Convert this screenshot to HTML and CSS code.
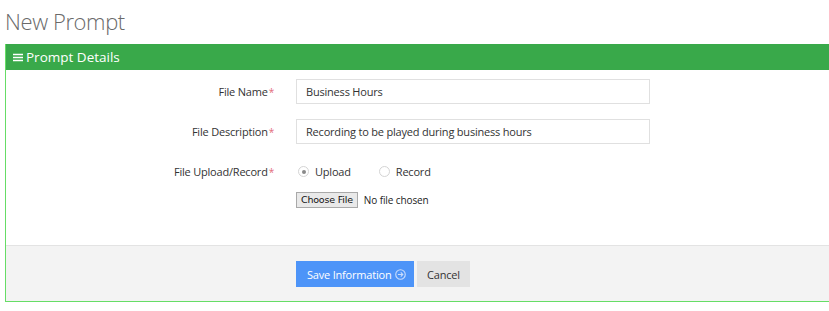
FILE: index.html
```html
<!DOCTYPE html>
<html lang="en">
<head>
    <meta charset="UTF-8">
    <title>New Prompt</title>
    <link rel="stylesheet" href="styles.css">
</head>
<body>
    <h1 class="page-title">New Prompt</h1>

    <div class="panel">
        <div class="panel-heading">
            <svg class="menu-icon" width="10" height="9" viewBox="0 0 10 9">
                <path d="M0 1.5h10M0 4.5h10M0 7.5h10" stroke="#fff" stroke-width="1.6"/>
            </svg>
            Prompt Details
        </div>

        <div class="panel-body">
            <div class="form-row">
                <label class="form-label">File Name<span class="req">*</span></label>
                <input class="form-input" type="text" value="Business Hours">
            </div>
            <div class="form-row">
                <label class="form-label">File Description<span class="req">*</span></label>
                <input class="form-input" type="text" value="Recording to be played during business hours">
            </div>
            <div class="form-row radio-row">
                <label class="form-label">File Upload/Record<span class="req">*</span></label>
                <div class="radio-group">
                    <span class="radio-option"><span class="radio checked"></span>Upload</span>
                    <span class="radio-option"><span class="radio"></span>Record</span>
                </div>
            </div>
            <div class="form-row file-row">
                <span></span>
                <div class="file-picker">
                    <span class="file-button">Choose File</span>
                    <span class="file-text">No file chosen</span>
                </div>
            </div>
        </div>

        <div class="panel-footer">
            <button class="btn btn-save">Save Information
                <svg class="btn-icon" width="11" height="11" viewBox="0 0 12 12">
                    <circle cx="6" cy="6" r="5.2" fill="none" stroke="#c9dcfb" stroke-width="1.2"/>
                    <path d="M3.2 6h5.2M6.3 3.8L8.5 6 6.3 8.2" fill="none" stroke="#c9dcfb" stroke-width="1.2"/>
                </svg>
            </button>
            <button class="btn btn-cancel">Cancel</button>
        </div>
    </div>
</body>
</html>
```

FILE: styles.css
```css
body {
    font-family: "Open Sans", Arial, sans-serif;
    margin: 0;
    background-color: #fff;
    color: #333;
    overflow: hidden;
}

.page-title {
    font-size: 22px;
    font-weight: 300;
    color: #6a6a6a;
    margin: 0;
    padding: 4px 0 0 5px;
    height: 40px;
    line-height: 34px;
    letter-spacing: -0.4px;
}

.panel {
    margin-left: 5px;
    width: 860px;
    border-left: 1px solid #66dd66;
    border-bottom: 1px solid #66dd66;
}

.panel-heading {
    background-color: #39a94a;
    color: #fff;
    font-size: 13.5px;
    height: 26px;
    line-height: 25px;
    padding-left: 7px;
    display: flex;
    align-items: center;
    gap: 3px;
}

.menu-icon {
    display: block;
    margin-top: 1px;
}

.panel-body {
    padding-top: 9px;
    height: 166px;
}

.form-row {
    display: grid;
    grid-template-columns: 268px 354px;
    column-gap: 22px;
    align-items: center;
    margin-bottom: 15px;
}

.form-label {
    text-align: right;
    font-size: 11px;
    letter-spacing: -0.2px;
    color: #333;
}

.req {
    color: #e36a7a;
    margin-left: 1px;
    font-size: 10px;
}

.form-input {
    height: 25px;
    box-sizing: border-box;
    border: 1px solid #e0e0e0;
    padding: 0 9px;
    font-family: "Open Sans", Arial, sans-serif;
    font-size: 11px;
    letter-spacing: -0.2px;
    color: #333;
    outline: none;
}

.radio-row {
    margin-top: 20px;
    margin-bottom: 13px;
}

.radio-group {
    display: flex;
    gap: 28px;
    font-size: 11px;
    letter-spacing: -0.2px;
    padding-left: 2px;
}

.radio-option {
    display: flex;
    align-items: center;
}

.radio {
    width: 11px;
    height: 11px;
    border: 1px solid #d4d4d4;
    border-radius: 50%;
    box-sizing: border-box;
    margin-right: 6px;
    position: relative;
    background: #fff;
}

.radio.checked::after {
    content: "";
    position: absolute;
    left: 2.5px;
    top: 2.5px;
    width: 4px;
    height: 4px;
    border-radius: 50%;
    background: #8a8a8a;
}

.file-picker {
    display: flex;
    align-items: center;
}

.file-button {
    background: #e9e9e9;
    border: 1px solid #a9a9a9;
    padding: 0 4px;
    height: 14px;
    line-height: 13px;
    color: #111;
    font-family: "DejaVu Sans", sans-serif;
    font-size: 9.5px;
    letter-spacing: -0.2px;
}

.file-text {
    margin-left: 6px;
    font-size: 10px;
    letter-spacing: -0.1px;
    color: #222;
}

.panel-footer {
    background-color: #f3f3f3;
    border-top: 1px solid #e3e3e3;
    padding: 15px 0 14px 290px;
    display: flex;
    gap: 3px;
}

.btn {
    border: none;
    height: 26px;
    font-family: "Open Sans", Arial, sans-serif;
    font-size: 11px;
    letter-spacing: -0.2px;
    cursor: pointer;
    white-space: nowrap;
}

.btn-save {
    background-color: #4d94f8;
    color: #fff;
    padding: 0 0 0 11px;
    width: 118px;
    display: flex;
    align-items: center;
    gap: 4px;
}

.btn-icon {
    display: block;
}

.btn-cancel {
    background-color: #e3e3e3;
    color: #333;
    width: 53px;
}
```
